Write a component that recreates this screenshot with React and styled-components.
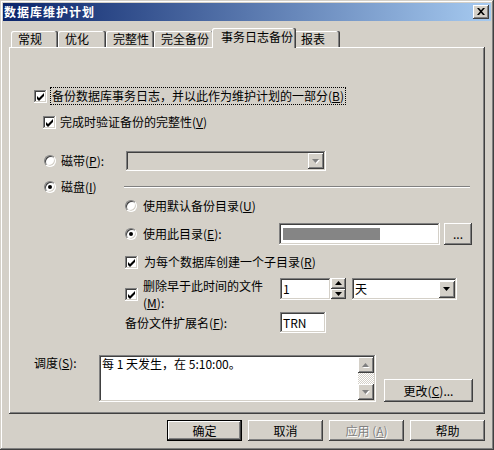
import React from 'react'
import styled, { createGlobalStyle, css } from 'styled-components'

const GlobalStyle = createGlobalStyle`
	html, body {
		margin: 0;
		padding: 0;
		background: #d4d0c8;
	}
	body {
		font-family: "Noto Sans CJK SC", "Liberation Sans", sans-serif;
		font-size: 12px;
		color: #000;
	}
	* {
		box-sizing: border-box;
	}
`

const raised = css`
	box-shadow: inset -1px -1px #404040, inset 1px 1px #fff,
		inset -2px -2px #808080, inset 2px 2px #d4d0c8;
`
const sunken = css`
	box-shadow: inset -1px -1px #fff, inset 1px 1px #808080,
		inset -2px -2px #d4d0c8, inset 2px 2px #404040;
`

const Window = styled.div`
	width: 494px;
	height: 450px;
	padding: 3px;
	background: #d4d0c8;
	box-shadow: inset -1px -1px #404040, inset 1px 1px #d4d0c8,
		inset -2px -2px #808080, inset 2px 2px #fff;
	display: flex;
	flex-direction: column;
`
const TitleBar = styled.div`
	height: 18px;
	flex: none;
	display: flex;
	align-items: center;
	justify-content: space-between;
	padding: 0 2px 0 1px;
	background: linear-gradient(90deg, #0a246a 0%, #a6caf0 100%);
`
const Title = styled.span`
	color: #fff;
	font-weight: bold;
	font-size: 12px;
	line-height: 18px;
	letter-spacing: 1px;
`
const CloseBtn = styled.span`
	width: 16px;
	height: 14px;
	background: #d4d0c8;
	${raised};
	display: flex;
	align-items: center;
	justify-content: center;
	padding: 0 1px 1px 0;
`
const Body = styled.div`
	flex: 1;
	padding: 0 6px;
	display: flex;
	flex-direction: column;
`
const TabStrip = styled.div`
	margin-top: 7px;
	height: 19px;
	flex: none;
	padding-left: 2px;
	display: flex;
	align-items: flex-end;
	position: relative;
	z-index: 1;
`
const Tab = styled.div`
	width: ${(p) => p.$w}px;
	height: 16px;
	flex: none;
	padding-left: 7px;
	display: flex;
	align-items: center;
	line-height: 14px;
	background: #d4d0c8;
	border-radius: 2px 2px 0 0;
	box-shadow: inset -1px 0 #404040, inset -2px 0 #808080, inset 1px 1px #fff;
	${(p) =>
		p.$active &&
		css`
			height: 20px;
			margin: 0 -2px -1px;
			padding: 0 0 2px 9px;
			position: relative;
			z-index: 2;
		`}
`
const Panel = styled.div`
	height: 367px;
	flex: none;
	display: flex;
	flex-direction: column;
	box-shadow: inset -1px -1px #404040, inset 1px 1px #fff,
		inset -2px -2px #808080;
`
const Row = styled.div`
	height: ${(p) => p.$h}px;
	margin-top: ${(p) => p.$top}px;
	margin-left: ${(p) => p.$left}px;
	flex: none;
	display: flex;
	align-items: ${(p) => p.$align || 'center'};
`
const Label = styled.span`
	margin-left: ${(p) => p.$ml || 0}px;
	margin-top: ${(p) => p.$mt || 0}px;
	width: ${(p) => (p.$w ? `${p.$w}px` : 'auto')};
	flex: none;
	line-height: ${(p) => p.$lh || 14}px;
	white-space: nowrap;
	${(p) =>
		p.$focus &&
		css`
			padding: 1px 1px;
			outline: 1px dotted #000;
			outline-offset: 0;
		`}
`
const Box = styled.span`
	width: 13px;
	height: 13px;
	flex: none;
	margin-top: ${(p) => p.$mt || 0}px;
	background: #fff;
	${sunken};
	display: block;
`
const Radio = styled.span`
	width: 12px;
	height: 12px;
	flex: none;
	border-radius: 50%;
	background: #fff;
	border: 1px solid;
	border-color: #808080 #fff #fff #808080;
	box-shadow: inset 1px 1px #404040, inset -1px -1px #d4d0c8;
	display: flex;
	align-items: center;
	justify-content: center;
	&::after {
		content: '';
		width: 4px;
		height: 4px;
		border-radius: 50%;
		background: #000;
		display: ${(p) => (p.$checked ? 'block' : 'none')};
	}
`
const Field = styled.div`
	width: ${(p) => p.$w}px;
	height: ${(p) => p.$h}px;
	margin-left: ${(p) => p.$ml || 0}px;
	flex: none;
	background: ${(p) => (p.$disabled ? '#d4d0c8' : '#fff')};
	${sunken};
	display: flex;
	align-items: center;
	padding: 2px 2px 2px 3px;
	line-height: 14px;
`
const FieldText = styled.span`
	flex: 1;
	white-space: nowrap;
`
const Redacted = styled.span`
	width: 97px;
	height: 12px;
	margin-left: 1px;
	background: #858585;
`
const ArrowBtn = styled.span`
	width: ${(p) => p.$w || 16}px;
	height: ${(p) => p.$h || 16}px;
	flex: none;
	background: #d4d0c8;
	${raised};
	display: flex;
	align-items: center;
	justify-content: center;
`
const UpDown = styled.div`
	width: 15px;
	height: 21px;
	flex: none;
	display: flex;
	flex-direction: column;
`
const Separator = styled.div`
	width: ${(p) => p.$w}px;
	height: 2px;
	border-top: 1px solid #808080;
	border-bottom: 1px solid #fff;
`
const Button = styled.button`
	width: ${(p) => p.$w || 75}px;
	height: ${(p) => p.$h || 21}px;
	margin-left: ${(p) => p.$ml || 0}px;
	align-self: ${(p) => p.$self || 'auto'};
	flex: none;
	padding: 0;
	border: none;
	background: #d4d0c8;
	font-family: inherit;
	font-size: 12px;
	line-height: 14px;
	color: #000;
	${raised};
	${(p) =>
		p.$default &&
		css`
			box-shadow: inset 0 0 0 1px #000, inset -2px -2px #404040,
				inset 2px 2px #fff, inset -3px -3px #808080;
		`}
	${(p) =>
		p.$disabled &&
		css`
			color: #808080;
			text-shadow: 1px 1px #fff;
		`}
`
const Memo = styled.div`
	width: 277px;
	height: 47px;
	flex: none;
	background: #fff;
	${sunken};
	display: flex;
	padding: 2px;
`
const MemoText = styled.div`
	flex: 1;
	padding: 0 1px;
	line-height: 14px;
`
const ScrollBar = styled.div`
	width: 16px;
	display: flex;
	flex-direction: column;
`
const Track = styled.div`
	flex: 1;
	background: repeating-conic-gradient(#fff 0 25%, #d4d0c8 0 50%) 0 0 / 2px 2px;
`
const ButtonRow = styled.div`
	margin-top: 6px;
	display: flex;
	justify-content: flex-end;
	gap: 6px;
`

const Check = ({ mt }) => (
	<Box $mt={mt}>
		<svg width='13' height='13' viewBox='0 0 13 13'>
			<polygon points='3,5 5,7 10,2 10,5 5,10 3,8' fill='#000' />
		</svg>
	</Box>
)

const Tri = ({ up, color = '#000', shadow }) => (
	<svg width='8' height='5' viewBox='0 0 8 5' style={{ overflow: 'visible' }}>
		{shadow && (
			<polygon
				points={up ? '4,1 8,5 1,5' : '1,1 8,1 4.5,5'}
				fill='#fff'
			/>
		)}
		<polygon points={up ? '3.5,0 7,4 0,4' : '0,0 7,0 3.5,4'} fill={color} />
	</svg>
)

const Mn = ({ k }) => (
	<>
		(<u>{k}</u>)
	</>
)

const tabs = [
	{ t: '常规', w: 47 },
	{ t: '优化', w: 48 },
	{ t: '完整性', w: 48 },
	{ t: '完全备份', w: 60 },
	{ t: '事务日志备份', w: 84, active: true },
	{ t: '报表', w: 46 },
]

export default function App() {
	return (
		<>
			<GlobalStyle />
			<Window>
				<TitleBar>
					<Title>数据库维护计划</Title>
					<CloseBtn>
						<svg width='8' height='7' viewBox='0 0 8 7'>
							<path
								d='M0 0h2l2 2.3L6 0h2L5 3.5 8 7H6L4 4.7 2 7H0l3-3.5z'
								fill='#000'
							/>
						</svg>
					</CloseBtn>
				</TitleBar>
				<Body>
					<TabStrip>
						{tabs.map((tab) => (
							<Tab key={tab.t} $w={tab.w} $active={tab.active}>
								{tab.t}
							</Tab>
						))}
					</TabStrip>
					<Panel>
						<Row $top={40} $left={25} $h={18}>
							<Check />
							<Label $ml={4} $focus>
								备份数据库事务日志，并以此作为维护计划的一部分
								<Mn k='B' />
							</Label>
						</Row>
						<Row $top={8} $left={34} $h={18}>
							<Check />
							<Label $ml={4}>
								完成时验证备份的完整性
								<Mn k='V' />
							</Label>
						</Row>
						<Row $top={20} $left={35} $h={20}>
							<Radio />
							<Label $ml={5} $w={65}>
								磁带<Mn k='P' />:
							</Label>
							<Field $w={200} $h={20} $disabled>
								<FieldText />
								<ArrowBtn>
									<Tri color='#808080' shadow />
								</ArrowBtn>
							</Field>
						</Row>
						<Row $top={9} $left={35} $h={14}>
							<Radio $checked />
							<Label $ml={5} $w={63}>
								磁盘<Mn k='I' />
							</Label>
							<Separator $w={346} />
						</Row>
						<Row $top={3} $left={116} $h={18}>
							<Radio />
							<Label $ml={6}>
								使用默认备份目录<Mn k='U' />
							</Label>
						</Row>
						<Row $top={8} $left={116} $h={22}>
							<Radio $checked />
							<Label $ml={6} $w={136}>
								使用此目录<Mn k='E' />:
							</Label>
							<Field $w={161} $h={22}>
								<Redacted />
							</Field>
							<Button $w={28} $h={22} $ml={4}>
								...
							</Button>
						</Row>
						<Row $top={8} $left={116} $h={18}>
							<Check />
							<Label $ml={6}>
								为每个数据库创建一个子目录<Mn k='R' />
							</Label>
						</Row>
						<Row $top={7} $left={116} $h={28} $align='flex-start'>
							<Check mt={10} />
							<Label $ml={5} $w={137} $mt={-1} $lh={17}>
								删除早于此时间的文件
								<br />
								<Mn k='M' />:
							</Label>
							<Field $w={51} $h={22}>
								<FieldText>1</FieldText>
							</Field>
							<UpDown>
								<ArrowBtn $w={15} $h={11}>
									<Tri up />
								</ArrowBtn>
								<ArrowBtn $w={15} $h={10}>
									<Tri />
								</ArrowBtn>
							</UpDown>
							<Field $w={105} $h={22} $ml={6}>
								<FieldText>天</FieldText>
								<ArrowBtn $h={17}>
									<Tri />
								</ArrowBtn>
							</Field>
						</Row>
						<Row $top={6} $left={116} $h={21}>
							<Label $w={155}>
								备份文件扩展名<Mn k='F' />:
							</Label>
							<Field $w={46} $h={21}>
								<FieldText>TRN</FieldText>
							</Field>
						</Row>
						<Row $top={22} $left={25} $h={47} $align='flex-start'>
							<Label $w={65} $mt={1}>
								调度<Mn k='S' />:
							</Label>
							<Memo>
								<MemoText>每 1 天发生，在 5:10:00。</MemoText>
								<ScrollBar>
									<ArrowBtn>
										<Tri up color='#808080' shadow />
									</ArrowBtn>
									<Track />
									<ArrowBtn>
										<Tri color='#808080' shadow />
									</ArrowBtn>
								</ScrollBar>
							</Memo>
							<Button $w={89} $h={23} $ml={8} $self='flex-end'>
								更改<Mn k='C' />...
							</Button>
						</Row>
					</Panel>
					<ButtonRow>
						<Button $default>确定</Button>
						<Button>取消</Button>
						<Button $disabled>
							应用 <Mn k='A' />
						</Button>
						<Button>帮助</Button>
					</ButtonRow>
				</Body>
			</Window>
		</>
	)
}
